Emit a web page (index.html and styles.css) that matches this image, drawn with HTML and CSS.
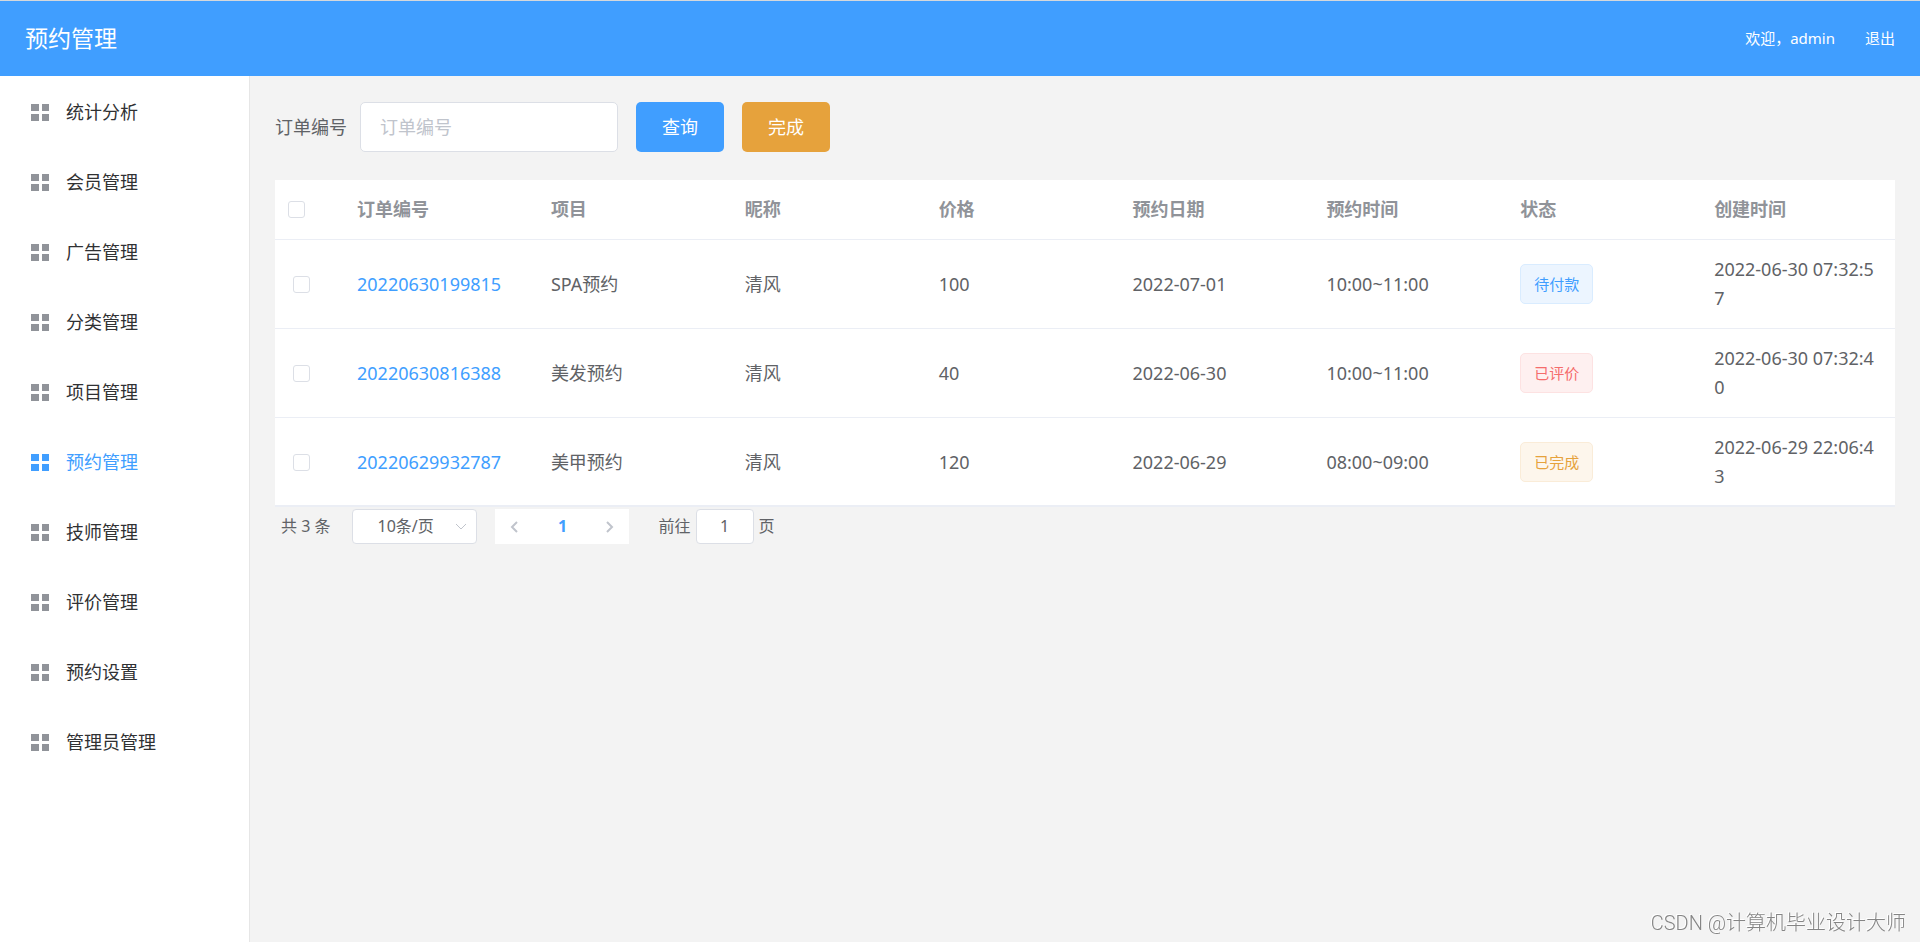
FILE: index.html
```html
<!DOCTYPE html>
<html lang="zh-CN">
<head>
<meta charset="utf-8">
<title>预约管理</title>
<link rel="stylesheet" href="styles.css">
</head>
<body>
<svg class="sprite" aria-hidden="true">
  <symbol id="grid" viewBox="0 0 18 17">
    <path d="M0 0h8v7H0zM11 0h7v7h-7zM0 10h8v7H0zM11 10h7v7h-7z"/>
  </symbol>
</svg>
<header class="topbar">
  <h1 class="topbar-title">预约管理</h1>
  <div class="topbar-user">
    <span>欢迎，admin</span>
    <a href="#logout">退出</a>
  </div>
</header>
<div class="layout">
  <nav class="sidebar">
    <a class="menu-item" href="#stats"><svg class="menu-icon"><use href="#grid"/></svg>统计分析</a>
    <a class="menu-item" href="#members"><svg class="menu-icon"><use href="#grid"/></svg>会员管理</a>
    <a class="menu-item" href="#ads"><svg class="menu-icon"><use href="#grid"/></svg>广告管理</a>
    <a class="menu-item" href="#categories"><svg class="menu-icon"><use href="#grid"/></svg>分类管理</a>
    <a class="menu-item" href="#projects"><svg class="menu-icon"><use href="#grid"/></svg>项目管理</a>
    <a class="menu-item is-active" href="#bookings"><svg class="menu-icon"><use href="#grid"/></svg>预约管理</a>
    <a class="menu-item" href="#technicians"><svg class="menu-icon"><use href="#grid"/></svg>技师管理</a>
    <a class="menu-item" href="#reviews"><svg class="menu-icon"><use href="#grid"/></svg>评价管理</a>
    <a class="menu-item" href="#settings"><svg class="menu-icon"><use href="#grid"/></svg>预约设置</a>
    <a class="menu-item" href="#admins"><svg class="menu-icon"><use href="#grid"/></svg>管理员管理</a>
  </nav>
  <main class="content">
    <form class="search">
      <label class="search-label" for="order-no">订单编号</label>
      <input class="search-input" id="order-no" type="text" placeholder="订单编号">
      <button class="btn btn-primary" type="button">查询</button>
      <button class="btn btn-warning" type="button">完成</button>
    </form>
    <table class="table">
      <colgroup><col class="col-select"><col><col><col><col><col><col><col><col></colgroup>
      <thead>
        <tr>
          <th><input class="check" type="checkbox" aria-label="全选"></th>
          <th>订单编号</th><th>项目</th><th>昵称</th><th>价格</th><th>预约日期</th><th>预约时间</th><th>状态</th><th>创建时间</th>
        </tr>
      </thead>
      <tbody>
        <tr>
          <td class="cell-select"><input class="check" type="checkbox" aria-label="选择 20220630199815"></td>
          <td><a class="order-link" href="#20220630199815">20220630199815</a></td>
          <td>SPA预约</td><td>清风</td><td>100</td><td>2022-07-01</td><td>10:00~11:00</td>
          <td><span class="tag tag-primary">待付款</span></td>
          <td>2022-06-30 07:32:57</td>
        </tr>
        <tr>
          <td class="cell-select"><input class="check" type="checkbox" aria-label="选择 20220630816388"></td>
          <td><a class="order-link" href="#20220630816388">20220630816388</a></td>
          <td>美发预约</td><td>清风</td><td>40</td><td>2022-06-30</td><td>10:00~11:00</td>
          <td><span class="tag tag-danger">已评价</span></td>
          <td>2022-06-30 07:32:40</td>
        </tr>
        <tr>
          <td class="cell-select"><input class="check" type="checkbox" aria-label="选择 20220629932787"></td>
          <td><a class="order-link" href="#20220629932787">20220629932787</a></td>
          <td>美甲预约</td><td>清风</td><td>120</td><td>2022-06-29</td><td>08:00~09:00</td>
          <td><span class="tag tag-warning">已完成</span></td>
          <td>2022-06-29 22:06:43</td>
        </tr>
      </tbody>
    </table>
    <div class="pagination">
      <span class="page-total">共 3 条</span>
      <span class="page-size">
        <select class="page-select" aria-label="每页条数"><option>10条/页</option></select>
        <svg class="page-caret" viewBox="0 0 12 8"><path d="M1 1l5 5 5-5"/></svg>
      </span>
      <span class="pager">
        <button class="pager-arrow" type="button" aria-label="上一页" disabled><svg class="arrow-icon" viewBox="0 0 8 12"><path d="M7 1L2 6l5 5"/></svg></button>
        <button class="pager-num" type="button">1</button>
        <button class="pager-arrow" type="button" aria-label="下一页" disabled><svg class="arrow-icon" viewBox="0 0 8 12"><path d="M1 1l5 5-5 5"/></svg></button>
      </span>
      <span class="page-jump">
        <label for="page-no">前往</label>
        <input class="page-input" id="page-no" type="text" value="1">
        <span>页</span>
      </span>
    </div>
  </main>
</div>
<div class="watermark">CSDN @计算机毕业设计大师</div>
</body>
</html>
```
FILE: styles.css
```css
* {
  box-sizing: border-box;
}

body {
  display: flex;
  flex-direction: column;
  min-height: 100vh;
  margin: 0;
  background: #f3f3f3;
  color: #606266;
  font: 18px/29px "Noto Sans", "Noto Sans CJK SC", sans-serif;
}

a {
  color: inherit;
  text-decoration: none;
}

button,
input,
select {
  margin: 0;
  font: inherit;
}

.sprite {
  position: absolute;
  width: 0;
  height: 0;
}

.topbar {
  display: flex;
  align-items: center;
  justify-content: space-between;
  height: 76px;
  padding: 0 25px;
  border-top: 1px solid #d5d8dc;
  background: #409eff;
  color: #fff;
}

.topbar-title {
  margin: 0;
  font-size: 23px;
  font-weight: 400;
}

.topbar-user {
  display: flex;
  gap: 30px;
  font-size: 15px;
}

.layout {
  display: flex;
  flex: 1;
}

.sidebar {
  flex: none;
  width: 250px;
  border-right: 1px solid #e6e6e6;
  background: #fff;
}

.menu-item {
  display: flex;
  align-items: center;
  gap: 17px;
  height: 70px;
  padding: 3px 31px 0;
  color: #303133;
}

.menu-icon {
  width: 18px;
  height: 17px;
  fill: #909399;
}

.menu-item.is-active {
  color: #409eff;
}

.is-active .menu-icon {
  fill: #409eff;
}

.content {
  flex: 1;
  min-width: 0;
  padding: 26px 25px;
}

.search {
  display: flex;
  align-items: center;
  margin-bottom: 28px;
}

.search-label {
  margin-right: 13px;
}

.search-input {
  width: 258px;
  height: 50px;
  margin-right: 18px;
  padding: 0 19px;
  border: 1px solid #dcdfe6;
  border-radius: 5px;
  background: #fff;
  color: #606266;
}

.search-input::placeholder {
  color: #c0c4cc;
}

.btn {
  width: 88px;
  height: 50px;
  margin-right: 18px;
  padding: 0;
  border: 0;
  border-radius: 5px;
  color: #fff;
}

.btn-primary {
  background: #409eff;
}

.btn-warning {
  background: #e6a23c;
}

.table {
  width: 100%;
  border-collapse: separate;
  border-spacing: 0;
  border-bottom: 1px solid #ebeef5;
  background: #fff;
  table-layout: fixed;
}

.col-select {
  width: 69px;
}

.table th,
.table td {
  padding: 15px 13px;
  border-bottom: 1px solid #ebeef5;
  text-align: left;
  word-break: break-all;
}

.table tr:last-child td {
  padding-bottom: 14px;
}

.table th {
  color: #909399;
  font-weight: 700;
}

.table .cell-select {
  padding-left: 18px;
}

.check {
  display: block;
  width: 17px;
  height: 17px;
  border: 1px solid #dcdfe6;
  border-radius: 3px;
  background: #fff;
  appearance: none;
}

.order-link {
  color: #409eff;
}

.tag {
  display: block;
  width: fit-content;
  padding: 0 13px;
  border: 1px solid;
  border-radius: 5px;
  font-size: 15px;
  line-height: 38px;
}

.tag-primary {
  border-color: #d9ecff;
  background: #ecf5ff;
  color: #409eff;
}

.tag-danger {
  border-color: #fde2e2;
  background: #fef0f0;
  color: #f56c6c;
}

.tag-warning {
  border-color: #faecd8;
  background: #fdf6ec;
  color: #e6a23c;
}

.pagination {
  display: flex;
  align-items: center;
  padding: 2px 6px;
  font-size: 16px;
  line-height: 35px;
}

.page-total {
  margin-right: 22px;
}

.page-size {
  position: relative;
  display: flex;
  width: 125px;
  margin-right: 18px;
}

.page-select,
.page-input {
  height: 35px;
  border: 1px solid #dcdfe6;
  border-radius: 4px;
  background: #fff;
  color: #606266;
}

.page-select {
  width: 100%;
  padding: 0 24px;
  line-height: 33px;
  appearance: none;
}

.page-caret {
  position: absolute;
  top: 14px;
  right: 10px;
  width: 12px;
  height: 8px;
  fill: none;
  stroke: #c0c4cc;
}

.pager {
  display: flex;
  margin-right: 29px;
  background: #fff;
}

.pager button {
  height: 35px;
  padding: 0;
  border: 0;
  background: none;
}

.pager .pager-arrow {
  display: grid;
  place-items: center;
  width: 38px;
}

.arrow-icon {
  width: 8px;
  height: 12px;
  fill: none;
  stroke: #c0c4cc;
  stroke-width: 2;
}

.pager .pager-num {
  width: 58px;
  color: #409eff;
  font-weight: 700;
}

.page-jump {
  display: flex;
  gap: 5px;
}

.page-input {
  width: 58px;
  padding: 0;
  text-align: center;
}

.watermark {
  position: fixed;
  right: 14px;
  bottom: 4px;
  color: #858585;
  font-family: Roboto, "Noto Sans CJK SC", sans-serif;
  font-size: 20px;
  font-weight: 300;
  text-shadow: -1px -1px 0 #fff;
}
```
